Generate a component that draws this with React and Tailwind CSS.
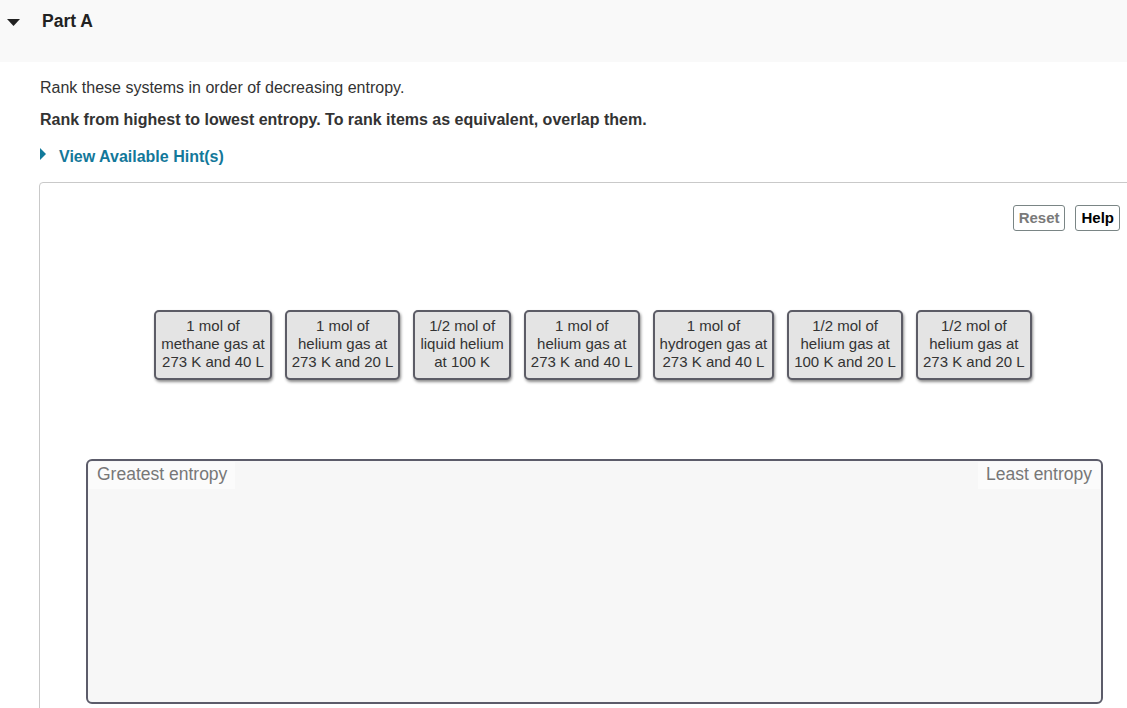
const ITEMS = [
  ['1 mol of', 'methane gas at', '273 K and 40 L'],
  ['1 mol of', 'helium gas at', '273 K and 20 L'],
  ['1/2 mol of', 'liquid helium', 'at 100 K'],
  ['1 mol of', 'helium gas at', '273 K and 40 L'],
  ['1 mol of', 'hydrogen gas at', '273 K and 40 L'],
  ['1/2 mol of', 'helium gas at', '100 K and 20 L'],
  ['1/2 mol of', 'helium gas at', '273 K and 20 L'],
]

function Card({ lines }) {
  return (
    <div className="bg-[#e4e4e4] border-2 border-[#5c5c66] rounded-[5px] px-[5px] pt-[5px] pb-[7px] text-center text-[15px] leading-[18px] text-[#333] shadow-[1px_2px_3px_rgba(0,0,0,0.45)]">
      {lines.map((l, i) => (
        <div key={i} className="whitespace-nowrap">{l}</div>
      ))}
    </div>
  )
}

export default function App() {
  return (
    <div className="w-[1127px] h-[708px] overflow-hidden bg-white font-['Liberation_Sans',Arial,sans-serif] text-[#333]">
      <div className="h-[62px] bg-[#f9f9f9] flex items-start pt-[10px]">
        <svg width="13" height="8" viewBox="0 0 13 8" className="ml-[7px] mt-[9px]">
          <path d="M0 0 H13 L6.5 7 Z" fill="#222" />
        </svg>
        <h2 className="ml-[22px] text-[17.5px] font-bold text-[#222] leading-[22px]">Part A</h2>
      </div>

      <div className="pl-[40px]">
        <p className="mt-[16px] text-[16px] leading-[20px]">Rank these systems in order of decreasing entropy.</p>
        <p className="mt-[12px] text-[16px] leading-[20px] font-bold">
          Rank from highest to lowest entropy. To rank items as equivalent, overlap them.
        </p>
        <div className="mt-[17px] flex items-center h-[20px]">
          <svg width="7" height="12" viewBox="0 0 7 12" className="-mt-[6px]">
            <path d="M0 0 L6 6 L0 12 Z" fill="#127a9b" />
          </svg>
          <span className="ml-[12px] text-[16px] font-bold text-[#13789a]">View Available Hint(s)</span>
        </div>

        <div className="mt-[15px] -ml-[1px] w-[1110px] h-[560px] border border-[#c9c9c9] rounded-tl-[4px] bg-white">
          <div className="flex justify-end gap-[10px] pr-[28px] pt-[22px]">
            <button className="h-[26px] px-[5px] border border-[#7a8585] rounded-[3px] text-[15px] font-bold text-[#7a7a7a] bg-white">Reset</button>
            <button className="h-[26px] px-[5px] border border-[#7a8585] rounded-[3px] text-[15px] font-bold text-black bg-white">Help</button>
          </div>

          <div className="mt-[79px] flex justify-center gap-[13px] pr-[2px]">
            {ITEMS.map((lines, i) => (
              <Card key={i} lines={lines} />
            ))}
          </div>

          <div className="mt-[79px] ml-[46px] w-[1017px] h-[245px] border-2 border-[#5c5c6a] rounded-[6px] bg-[#f7f7f7] flex justify-between items-start">
            <span className="ml-[1px] mt-[1px] px-[8px] h-[27px] leading-[24px] bg-[#fbfbfb] text-[17.5px] text-[#777]">Greatest entropy</span>
            <span className="mr-[1px] mt-[1px] px-[8px] h-[27px] leading-[24px] bg-[#fbfbfb] text-[17.5px] text-[#777]">Least entropy</span>
          </div>
        </div>
      </div>
    </div>
  )
}
